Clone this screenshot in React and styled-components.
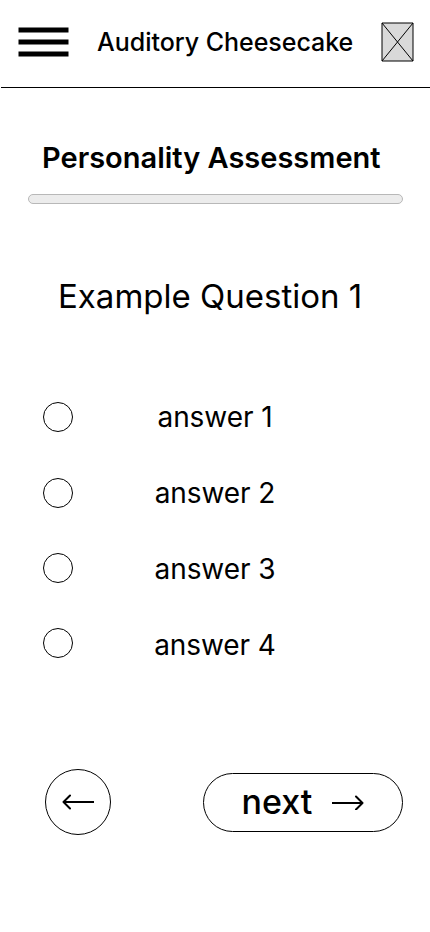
import React from "react";
import styled, { createGlobalStyle } from "styled-components";

const GlobalStyle = createGlobalStyle`
  * { box-sizing: border-box; }
  body { margin: 0; background: #fff; color: #000; font-family: Inter, "Liberation Sans", sans-serif; }
`;
const Page = styled.div`width: 430px; height: 932px; overflow: hidden; display: flex; flex-direction: column;`;
const Header = styled.header`
  height: 88px; margin-left: 1px; border-bottom: 1px solid #000; flex: none;
  display: flex; align-items: flex-start; padding: 22px 16px 0 17px;
`;
const Menu = styled.button`border: 0; padding: 0; background: none; margin-top: 5px; width: 51px; height: 30px; flex: none;`;
const MenuIcon = styled.svg`display: block; width: 51px; height: 30px;`;
const Brand = styled.div`margin: 5px 0 0 28px; width: 284px; font-size: 25px; line-height: 31px; font-weight: 500; letter-spacing: -.03px; white-space: nowrap;`;
const Picture = styled.svg`display: block; width: 33px; height: 40px; flex: none;`;
const Title = styled.h1`margin: 52px 0 0 42px; font-size: 29px; line-height: 36px; font-weight: 600; white-space: nowrap;`;
const Progress = styled.div`margin: 18px 27px 0 28px; height: 10px; flex: none; border: 1px solid #b8b8b8; border-radius: 5px; background: #ececec;`;
const Question = styled.h2`margin: 72px 0 0 58px; font-size: 33px; line-height: 40px; font-weight: 400; white-space: nowrap;`;
const Answers = styled.div`margin: 86px 0 0 43px; display: flex; flex-direction: column; gap: 46px;`;
const Answer = styled.label`display: flex; align-items: flex-start; height: 30px;`;
const Radio = styled.input`appearance: none; margin: ${p => -p.$lift}px 0 0; width: 30px; height: 30px; border: 1px solid #000; border-radius: 50%;`;
const AnswerText = styled.span`width: 284px; text-align: center; font-size: 28px; line-height: 30px; letter-spacing: -.08px;`;
const Nav = styled.nav`margin: 109px 27px 0 45px; display: flex; align-items: center; justify-content: space-between;`;
const Button = styled.button`
  display: flex; align-items: center; justify-content: center; gap: 20px; padding: 0;
  width: ${p => p.$wide ? 200 : 66}px; height: ${p => p.$wide ? 59 : 66}px;
  border: 1px solid #000; border-radius: 33px; background: #fff; color: #000;
  font: 500 34px/42px Inter, sans-serif;
`;
const Arrow = styled.svg`
  display: block; width: 32px; height: 16px;
  fill: none; stroke: #000; stroke-width: 2; stroke-linejoin: round;
`;

const answers = [
  { text: "answer 1", lift: 0 },
  { text: "answer 2", lift: 0 },
  { text: "answer 3", lift: 1 },
  { text: "answer 4", lift: 2 },
];

export default function App() {
  return <Page>
    <GlobalStyle />
    <Header>
      <Menu aria-label="Menu"><MenuIcon viewBox="0 0 51 30" stroke="#000" strokeWidth="5"><path d="M.5 3h50M.5 15h50M.5 27h50" /></MenuIcon></Menu>
      <Brand>Auditory Cheesecake</Brand>
      <Picture viewBox="0 0 33 40" fill="none" stroke="#000"><path fill="#d9d9d9" d="M1 1h31v38H1z" /><path d="M1 1l31 38M32 1L1 39" /></Picture>
    </Header>
    <Title>Personality Assessment</Title>
    <Progress />
    <Question>Example Question 1</Question>
    <Answers>{answers.map(a => <Answer key={a.text}><Radio type="radio" name="answer" $lift={a.lift} /><AnswerText>{a.text}</AnswerText></Answer>)}</Answers>
    <Nav>
      <Button aria-label="Back"><Arrow viewBox="0 0 32 16"><path d="M31.5 8H1.5M8 1.5L1.5 8 8 14.5" strokeLinecap="round" /></Arrow></Button>
      <Button $wide>next<Arrow viewBox="0 0 32 16"><path d="M0 9h31" /><path d="M24 2.5L30.5 9 24 15.5" strokeLinecap="round" /></Arrow></Button>
    </Nav>
  </Page>;
}
